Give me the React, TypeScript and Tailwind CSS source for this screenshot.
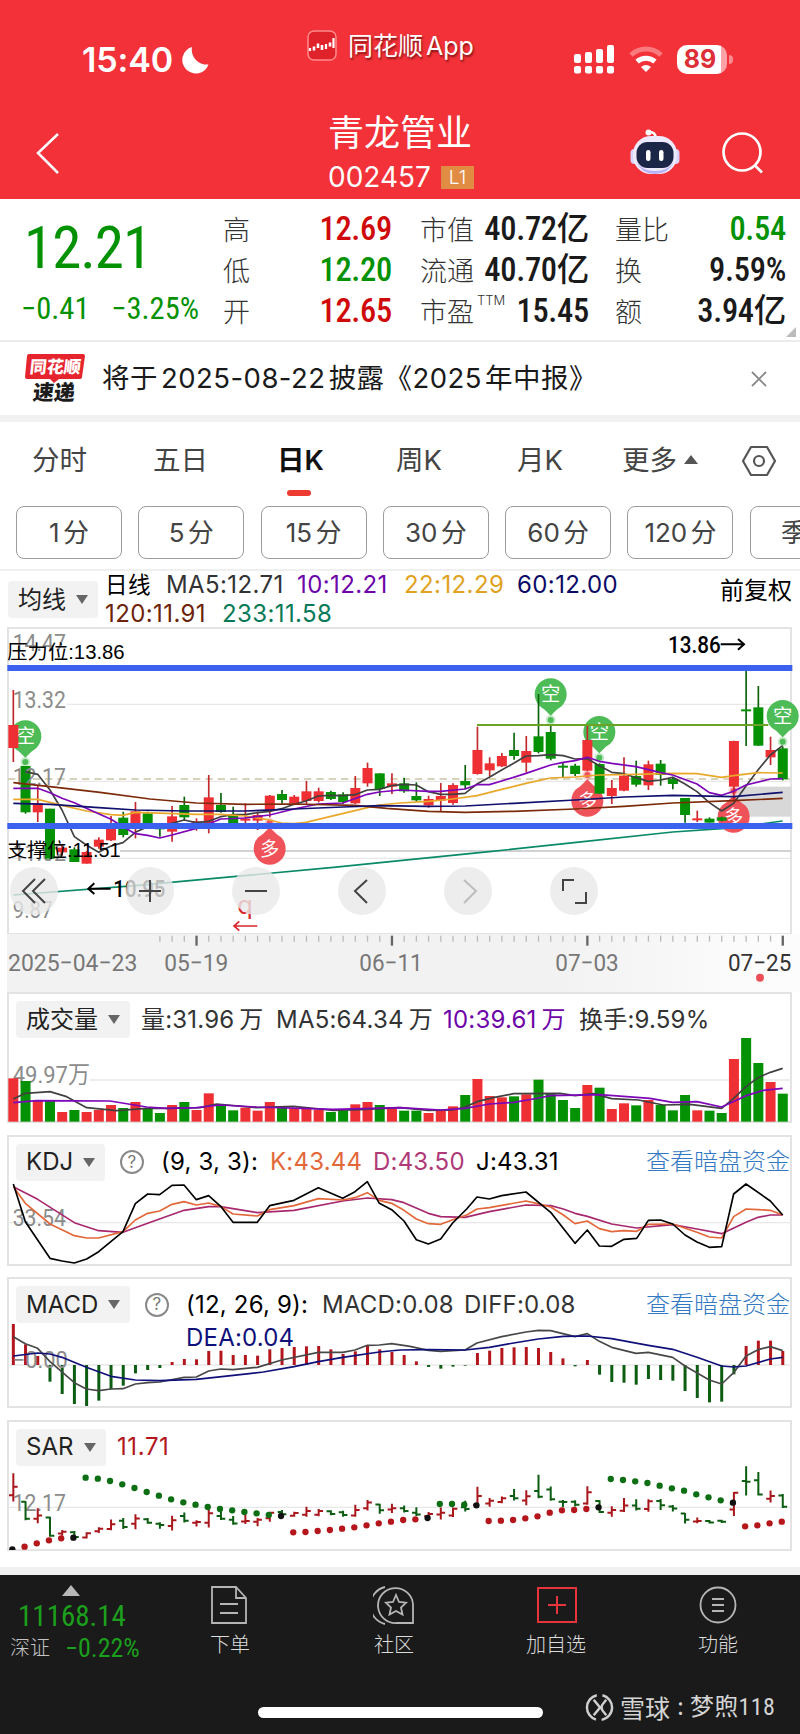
import type { ReactNode } from "react";

const SANS = "font-['Inter','Noto_Sans_CJK_SC',sans-serif]";
const DIN = "font-['Roboto','Noto_Sans_CJK_SC',sans-serif] [font-stretch:85%]";

const RED = "#ee2f33";
const GREEN = "#049204";

// All charts share one horizontal scale: three chart units per pixel, 64 trading days.
const dayX = (i: number) => 40 + i * 36.64;

type Side = "r" | "g";

// side, high, body top, body bottom, low
const candles: [Side, number, number, number, number][] = [
  ["r", 210, 315, 384, 426], ["g", 438, 438, 577, 581], ["r", 495, 550, 577, 606], ["g", 566, 566, 716, 716],
  ["r", 675, 683, 697, 707], ["g", 682, 688, 726, 726], ["r", 693, 696, 731, 731], ["r", 652, 659, 680, 686],
  ["r", 588, 622, 661, 663], ["g", 575, 593, 645, 652], ["r", 546, 574, 617, 655], ["g", 575, 580, 609, 609],
  ["g", 610, 618, 628, 650], ["r", 558, 589, 635, 665], ["g", 530, 555, 592, 600], ["r", 595, 604, 609, 632],
  ["r", 465, 532, 610, 640], ["g", 519, 555, 576, 578], ["g", 560, 584, 615, 618], ["r", 550, 596, 600, 612],
  ["r", 575, 585, 602, 630], ["r", 525, 527, 573, 592], ["g", 510, 522, 540, 551], ["r", 525, 530, 551, 553],
  ["r", 483, 514, 543, 552], ["r", 503, 514, 543, 547], ["g", 512, 516, 537, 540], ["g", 517, 523, 546, 551],
  ["r", 468, 504, 550, 552], ["r", 428, 444, 490, 500], ["g", 460, 460, 507, 528], ["r", 460, 490, 500, 522],
  ["g", 473, 490, 514, 518], ["g", 487, 528, 541, 545], ["r", 527, 537, 556, 563], ["r", 489, 528, 542, 574],
  ["r", 490, 495, 549, 554], ["g", 435, 483, 496, 508], ["r", 320, 390, 462, 464], ["r", 412, 430, 451, 470],
  ["r", 399, 408, 439, 441], ["g", 338, 390, 408, 419], ["r", 348, 393, 428, 457], ["g", 222, 349, 396, 400],
  ["g", 318, 336, 416, 421], ["g", 428, 437, 440, 474], ["g", 431, 437, 462, 468], ["r", 315, 360, 452, 454],
  ["g", 430, 432, 521, 521], ["r", 480, 504, 528, 552], ["r", 412, 467, 512, 514], ["g", 422, 468, 494, 500],
  ["r", 422, 433, 496, 510], ["g", 420, 431, 465, 497], ["g", 470, 477, 492, 508], ["g", 534, 534, 585, 608],
  ["r", 572, 595, 600, 606], ["g", 592, 596, 608, 608], ["g", 590, 592, 602, 604], ["r", 362, 363, 500, 545],
  ["g", 152, 268, 273, 378], ["g", 198, 262, 377, 378], ["r", 350, 390, 412, 435], ["g", 380, 385, 478, 481],
];

const averages = [
  { color: "#0a8a68", d: "40,825 406,797 700,770 1000,742 1200,722 1468,695 1750,665 2018,636 2165,626 2250,616 2348,603" },
  { color: "#404040", d: "76,455 113,463 150,510 186,570 223,650 259,675 296,697 333,678 369,668 406,637 443,620 479,622 516,610 552,600 589,608 626,604 662,590 699,584 736,584 772,578 809,574 845,566 882,553 918,543 955,528 992,526 1028,527 1065,524 1102,510 1138,508 1175,497 1212,493 1249,495 1285,515 1322,523 1358,523 1395,520 1431,492 1468,472 1505,450 1541,430 1578,408 1615,407 1652,404 1690,407 1725,417 1762,416 1798,437 1835,457 1872,461 1908,473 1945,484 1982,480 2018,472 2055,492 2091,515 2128,548 2165,573 2201,550 2238,498 2274,450 2311,405 2348,377" },
  { color: "#eaa82a", d: "40,538 113,538 186,556 259,573 333,584 369,586 406,577 589,583 662,583 736,588 809,600 845,609 882,611 918,607 955,598 1065,572 1102,563 1138,555 1200,549 1285,544 1358,537 1431,527 1505,508 1578,490 1652,474 1725,471 1798,465 1908,463 2018,460 2091,461 2165,472 2201,467 2274,458 2348,459" },
  { color: "#7d06b8", d: "40,505 113,505 150,518 186,535 223,548 259,565 333,598 369,620 406,641 443,646 479,654 516,645 589,625 626,612 662,597 736,594 809,585 882,567 955,552 1028,549 1102,523 1138,516 1200,510 1285,514 1322,514 1395,507 1431,494 1468,494 1505,483 1578,460 1652,435 1690,427 1725,422 1762,412 1798,424 1835,430 1908,440 1982,458 2018,465 2091,492 2128,518 2165,526 2201,514 2238,495 2311,477 2348,476" },
  { color: "#7c2b0a", d: "40,488 150,500 300,517 450,537 589,549 736,553 882,552 1065,556 1160,565 1285,574 1395,577 1541,574 1725,567 1872,559 2018,549 2200,542 2348,535" },
  { color: "#10106e", d: "40,550 150,553 296,563 406,570 552,573 736,573 882,567 1028,561 1138,557 1285,559 1395,558 1541,550 1725,540 1872,531 2018,526 2200,530 2348,517" },
];

const volumes = [
  280, 288, 345, 345, 381, 375, 381, 375, 360, 369, 351, 370, 384, 360, 351, 375, 325, 360, 376, 368, 377, 351,
  366, 370, 369, 375, 381, 377, 358, 351, 360, 369, 377, 377, 384, 377, 364, 330, 282, 333, 337, 334, 328, 284,
  326, 345, 369, 300, 308, 372, 355, 361, 345, 360, 376, 330, 376, 377, 384, 222, 159, 234, 291, 326,
];

// bar end of each MACD column, measured from the zero line at 284
const macd = [
  162, 223, 258, 335, 372, 402, 408, 392, 358, 347, 310, 300, 294, 276, 267, 268, 243, 242, 255, 255, 257, 238,
  234, 231, 229, 228, 238, 252, 244, 227, 238, 246, 255, 274, 291, 296, 290, 287, 249, 242, 234, 232, 231, 234,
  246, 265, 289, 270, 314, 336, 338, 344, 327, 330, 332, 363, 384, 397, 395, 313, 228, 212, 212, 243,
];

// runs of SAR dots: first day, colour, heights
const sarRuns: { from: number; color: string; ys: number[] }[] = [
  { from: 0, color: "#111", ys: [838] },
  { from: 1, color: "#b5161c", ys: [830, 820, 811, 805] },
  { from: 5, color: "#111", ys: [803] },
  { from: 6, color: "#0d6e14", ys: [623, 626, 633, 643, 654, 666, 677, 688, 697, 704, 711, 717, 721, 726, 730, 735] },
  { from: 22, color: "#111", ys: [738] },
  { from: 23, color: "#b5161c", ys: [787, 786, 783, 780, 776, 772, 766, 760, 755, 750, 748] },
  { from: 34, color: "#111", ys: [744] },
  { from: 35, color: "#0d6e14", ys: [702, 702, 704] },
  { from: 38, color: "#111", ys: [706] },
  { from: 39, color: "#b5161c", ys: [753, 752, 750, 745, 739, 728, 721, 720, 717] },
  { from: 48, color: "#111", ys: [712] },
  { from: 49, color: "#0d6e14", ys: [627, 630, 634, 639, 647, 655, 662, 673, 682, 691] },
  { from: 59, color: "#111", ys: [698] },
  { from: 60, color: "#b5161c", ys: [769, 766, 760, 755] },
];

function Line({ d, color, w = 5 }: { d: string; color: string; w?: number }) {
  return <polyline points={d} fill="none" stroke={color} strokeWidth={w} strokeLinejoin="round" />;
}

function Scale({ x = 38, y, w, children }: { x?: number; y: number; w: number; children: string }) {
  return (
    <text
      x={x}
      y={y}
      textLength={w}
      lengthAdjust="spacingAndGlyphs"
      className="fill-[#8c8c8c] font-['Roboto','Noto_Sans_CJK_SC',sans-serif] text-[70px]"
    >
      {children}
    </text>
  );
}

function Pin({ x, y, down }: { x: number; y: number; down?: boolean }) {
  const color = down ? "#4dbb56" : "#f0525a";
  const s = down ? 1 : -1;
  return (
    <g>
      <path d={`M${x - 24} ${y + 40 * s} L${x} ${y + 64 * s} L${x + 24} ${y + 40 * s}Z`} fill={color} />
      <circle cx={x} cy={y} r={48} fill={color} />
      <circle cx={x} cy={y + 77 * s} r={15} fill={color} opacity={0.3} />
      <circle cx={x} cy={y + 77 * s} r={9} fill={color} />
      <text x={x} y={y + 21} textAnchor="middle" className="fill-white font-['Noto_Sans_CJK_SC',sans-serif] text-[58px]">
        {down ? "空" : "多"}
      </text>
    </g>
  );
}

function CandleChart() {
  return (
    <svg viewBox="0 21 2400 921" className="absolute top-0 left-0 h-[307px] w-[800px] overflow-visible">
      <path d="M200 253H2370M200 484H2370M24 715H2370" stroke="#e8e8e8" strokeWidth={4} />
      <path d="M360 693H2375" stroke="#d2d2d2" strokeWidth={6} />
      <path d="M24 477H2370" stroke="#c9c5a4" strokeWidth={4} strokeDasharray="22 15" />
      <rect x={2215} y={500} width={160} height={90} fill="#d8d8d8" />
      <Scale y={92} w={160}>14.47</Scale>
      <Scale y={263} w={160}>13.32</Scale>
      <Scale y={724} w={160}>11.02</Scale>
      <Scale y={893} w={120}>9.87</Scale>
      <Pin x={76} y={349} down />
      <Pin x={1652} y={223} down />
      <Pin x={1798} y={336} down />
      <Pin x={2348} y={288} down />
      <Pin x={809} y={686} />
      <Pin x={1762} y={542} />
      <Pin x={2201} y={590} />
      {candles.map(([side, hi, top, bot, lo], i) => {
        const color = side === "r" ? RED : GREEN;
        const x = dayX(i);
        return (
          <g key={i}>
            <path d={`M${x} ${hi}V${lo}`} stroke={side === "r" ? "#c4272c" : "#0b640b"} strokeWidth={5} />
            <rect x={x - 15} y={top} width={30} height={Math.max(bot - top, 6)} fill={color} />
          </g>
        );
      })}
      <Scale y={495} w={160}>12.17</Scale>
      <path d="M1431 315H2305" stroke="#6ca326" strokeWidth={6} />
      {averages.map((a) => (
        <Line key={a.color} d={a.d} color={a.color} />
      ))}
      <path d="M22 144H2377M22 618H2377" stroke="#3b62ee" strokeWidth={18} />
      <g className="fill-black font-['Liberation_Sans','Noto_Sans_CJK_SC',sans-serif] text-[58px]">
        <text x={22} y={118} textLength={352} lengthAdjust="spacingAndGlyphs">压力位:13.86</text>
        <text x={22} y={712} textLength={340} lengthAdjust="spacingAndGlyphs">支撑位:11.51</text>
      </g>
      <g className="fill-black font-['Roboto',sans-serif] text-[70px] font-medium">
        <text x={2004} y={99} textLength={158} lengthAdjust="spacingAndGlyphs">13.86</text>
        <text x={340} y={832} textLength={156} lengthAdjust="spacingAndGlyphs">10.95</text>
      </g>
      <path d="M2162 73H2232M2214 57L2232 73L2214 89M332 806H265M283 790L265 806L283 822" fill="none" stroke="#000" strokeWidth={6} />
      <text x={712} y={882} className="fill-[#d8262c] font-['Inter',sans-serif] text-[76px]">q</text>
      <path d="M772 918H702M718 904L702 918L718 932" fill="none" stroke="#d8262c" strokeWidth={5} />
    </svg>
  );
}

const tools = [
  { icon: <path d="M25 12L13 24L25 36M35 12L23 24L35 36" />, gap: "mr-[68px]" },
  { icon: <path d="M13 24H35M24 13V35" />, gap: "mr-[58px]" },
  { icon: <path d="M13 24H35" />, gap: "mr-[58px]" },
  { icon: <path d="M29 13L17 24L29 36" />, gap: "mr-[58px]" },
  { icon: <path d="M20 13L32 24L20 36" stroke="#bdbdbd" />, gap: "mr-[58px]" },
  { icon: <path d="M24 13H13V24M36 25V36H25" />, gap: "" },
];

function Caret() {
  return <span className="h-0 w-0 border-x-[6px] border-t-[9px] border-x-transparent border-t-[#666]" />;
}

function Selector({ label, className }: { label: string; className: string }) {
  return (
    <div className={`flex h-[37px] shrink-0 items-center justify-between rounded bg-[#f2f2f2] pr-[10px] pl-[10px] text-[24px] tracking-normal text-[#222] ${className}`}>
      {label}
      <Caret />
    </div>
  );
}

function Help() {
  return (
    <span className="flex h-6 w-6 shrink-0 items-center justify-center rounded-full border-2 border-[#8a8a8a] text-[17px] leading-none text-[#777]">
      ?
    </span>
  );
}

function Panel({ head, view, children }: { head: ReactNode; view: string; children: ReactNode }) {
  return (
    <section className="relative h-[142.500px]">
      <div className="mx-[7px] h-[131px] w-[785px] border-2 border-[#e3e3e3]" />
      <svg viewBox={view} className="absolute top-0 left-0 h-[130px] w-[800px]">
        {children}
      </svg>
      <div className="absolute top-[9px] left-[16px] flex h-[37px] w-[784px] items-center text-[24px] font-[380] tracking-[0.2px] whitespace-nowrap [word-spacing:-2px]">
        {head}
      </div>
    </section>
  );
}

function Header() {
  return (
    <header className="h-[199px] bg-[#f23138] text-white">
      <div className="flex h-[98px] items-start">
        <div className="mt-[40px] ml-[82px] flex w-[225px] items-center">
          <span className="w-[99px] text-[34px] leading-[40px] font-semibold tracking-[-0.1px]">15:40</span>
          <svg viewBox="0 0 28 28" className="h-7 w-7 fill-white">
            <path d="M11 1A13.500 13.500 0 1 0 27.500 18.500A15 15 0 0 1 11 1Z" />
          </svg>
        </div>
        <svg viewBox="0 0 30 31" className="mt-[30px] h-[31px] w-[30px]" fill="none" stroke="#fff">
          <rect x="1" y="1" width="28" height="29" rx="6" fill="#e0222b" stroke="#ff8b8b" strokeWidth="1.500" />
          <path d="M3 21V18M19 19V14M26.500 18V8" strokeWidth="2.200" />
          <path d="M7 16.500V20.500M11 13.500V18M15 15V20M23 12.500V16.500" strokeWidth="2.600" />
        </svg>
        <span className="mt-[28px] ml-[11px] text-[25px] leading-[36px] [text-shadow:1px_2px_2px_rgba(60,0,0,0.6)] [word-spacing:-4px]">
          同花顺 App
        </span>
        <svg viewBox="0 0 42 30" className="mt-[44px] ml-auto h-[30px] w-[42px] fill-white">
          <rect x="1" y="10" width="7" height="9" rx="2" />
          <rect x="12" y="8" width="7" height="11" rx="2" />
          <rect x="23" y="5" width="7" height="14" rx="2" />
          <rect x="34" y="1" width="7" height="18" rx="2" />
          <rect x="1" y="22" width="7" height="7.500" rx="2" />
          <rect x="12" y="22" width="7" height="7.500" rx="2" />
          <rect x="23" y="22" width="7" height="7.500" rx="2" />
          <rect x="34" y="22" width="7" height="7.500" rx="2" />
        </svg>
        <svg viewBox="0 0 36 28" className="mt-[45px] ml-[13px] h-7 w-9" fill="none" strokeWidth="5">
          <path d="M3 10A22 22 0 0 1 33 10" stroke="#fb7a7e" />
          <path d="M9 16.500A14 14 0 0 1 27 16.500" stroke="#fff" />
          <path d="M13 22A8 8 0 0 1 23 22L18 27Z" fill="#fff" />
        </svg>
        <div className="mt-[45px] ml-[13px] flex h-[29px] w-[50px] items-center justify-center rounded-[10px] bg-[linear-gradient(90deg,#fff_88%,#fba3a6_88%)] pr-1 text-[25px] font-bold text-[#dd2f38]">
          89
        </div>
        <span className="mt-[55px] mr-[67px] ml-[2px] h-[9px] w-[4px] rounded-r-full bg-[#f98e92]" />
      </div>
      <div className="flex h-[101px] items-start">
        <svg viewBox="0 0 24 42" className="mt-[34px] ml-[36px] h-[42px] w-6" fill="none" stroke="#fff" strokeWidth="2.500">
          <path d="M22 2L2 21L22 41" />
        </svg>
        <div className="ml-[268px] w-[146px]">
          <div className="mt-[6px] font-['Noto_Sans_CJK_SC',sans-serif] text-[36px] leading-[52px] whitespace-nowrap">青龙管业</div>
          <div className="mt-[6px] flex items-center justify-between">
            <span className="text-[28px] leading-[30px]">002457</span>
            <span className="h-[23px] w-[33px] bg-[#e08c42] text-center text-[19px] leading-[23px] font-light">L1</span>
          </div>
        </div>
        <svg viewBox="0 0 50 46" className="mt-[31px] ml-[156px] h-[46px] w-[50px]">
          <path d="M26 9Q25 3 20 3" fill="none" stroke="#fff" strokeWidth="2.500" />
          <circle cx="18.500" cy="3.500" r="3" fill="#fff" />
          <rect x="0.500" y="20" width="9" height="15" rx="4" fill="#d9d4ff" />
          <rect x="40.500" y="20" width="9" height="15" rx="4" fill="#d9d4ff" />
          <rect x="3" y="7" width="44" height="38" rx="18" fill="#edeaff" />
          <path d="M6 33Q12 45 25 45T44 33Q38 42 25 42T6 33Z" fill="#b9b2f7" />
          <rect x="6.500" y="13" width="37" height="26" rx="11" fill="#1c2748" />
          <rect x="16" y="21" width="4.500" height="11" rx="2.200" fill="#fff" />
          <rect x="29" y="21" width="4.500" height="11" rx="2.200" fill="#fff" />
        </svg>
        <svg viewBox="0 0 42 42" className="mt-[34px] ml-[42px] h-[42px] w-[42px]" fill="none" stroke="#fff" strokeWidth="2.700">
          <circle cx="20" cy="20" r="18.500" />
          <path d="M32.500 33L40 40.500" />
        </svg>
      </div>
    </header>
  );
}

function QuoteRow({ label, value, tone, sup }: { label: string; value: string; tone: string; sup?: string }) {
  return (
    <div className="flex h-[41px] items-center justify-between whitespace-nowrap">
      <span className="relative font-['Noto_Sans_CJK_SC',sans-serif] text-[27px] font-light text-[#333]">
        {label}
        {sup && <sup className="absolute top-[3px] left-[57px] font-['Inter',sans-serif] text-[13px] leading-none">{sup}</sup>}
      </span>
      <span className={`text-[32.500px] font-medium tracking-[-0.3px] ${DIN} ${tone}`}>{value}</span>
    </div>
  );
}

function Quote() {
  return (
    <section className="relative flex h-[143px] border-b-2 border-[#ececec] pt-[9.500px]">
      <div className="w-[223px] text-[#049204]">
        <div className={`mt-[5px] ml-[24px] text-[59px] leading-[68px] tracking-[-1px] ${DIN} font-[450]`}>12.21</div>
        <div className={`mt-[6px] ml-[21px] flex w-[178px] justify-between text-[30.500px] leading-[42px] ${DIN}`}>
          <span>−0.41</span>
          <span>−3.25%</span>
        </div>
      </div>
      <div className="w-[169px]">
        <QuoteRow label="高" value="12.69" tone="text-[#d00a0a]" />
        <QuoteRow label="低" value="12.20" tone="text-[#049204]" />
        <QuoteRow label="开" value="12.65" tone="text-[#d00a0a]" />
      </div>
      <div className="ml-[28px] w-[169px]">
        <QuoteRow label="市值" value="40.72亿" tone="text-[#1a1a1a]" />
        <QuoteRow label="流通" value="40.70亿" tone="text-[#1a1a1a]" />
        <QuoteRow label="市盈" value="15.45" tone="text-[#1a1a1a]" sup="TTM" />
      </div>
      <div className="ml-[26px] w-[171px]">
        <QuoteRow label="量比" value="0.54" tone="text-[#049204]" />
        <QuoteRow label="换" value="9.59%" tone="text-[#1a1a1a]" />
        <QuoteRow label="额" value="3.94亿" tone="text-[#1a1a1a]" />
      </div>
      <span className="absolute right-[4px] bottom-[3px] h-0 w-0 border-b-[10px] border-l-[10px] border-b-[#bbb] border-l-transparent" />
    </section>
  );
}

function Notice() {
  return (
    <section className="flex h-[73px] items-center">
      <div className="relative ml-[25px] h-[52px] w-[60px]">
        <svg viewBox="0 0 60 52" className="absolute inset-0 h-[52px] w-[60px]">
          <path d="M4 1H58Q60 1 60 3L57 24Q57 26 55 26H34L29 30L25 26H2Q0 26 0 24L2 3Q2 1 4 1Z" fill="#e5242d" />
        </svg>
        <div className="absolute top-[3px] left-[5px] -skew-x-6 text-[17px] leading-[22px] font-black whitespace-nowrap text-white">同花顺</div>
        <div className="absolute top-[28px] left-[8px] w-[46px] -skew-x-6 text-[21px] leading-[23px] font-black whitespace-nowrap text-[#1c1c1c]">
          速递
        </div>
      </div>
      <span className="ml-[17px] text-[27.500px] font-[380] tracking-[0.45px] whitespace-nowrap text-[#1a1a1a] [word-spacing:-5px]">
        将于 2025-08-22 披露《2025 年中报》
      </span>
      <svg viewBox="0 0 16 16" className="mr-[33px] ml-auto h-4 w-4" stroke="#8a8a8a" strokeWidth="1.800">
        <path d="M1 1L15 15M15 1L1 15" />
      </svg>
    </section>
  );
}

const periods = ["1 分", "5 分", "15 分", "30 分", "60 分", "120 分", "季K"];

function Tabs() {
  return (
    <section className="h-[145px] border-t-[7px] border-[#f1f1f1] font-[380]">
      <div className="flex h-[78px] items-center pl-[32px] text-[27.500px] whitespace-nowrap text-[#444]">
        <span className="w-[121px]">分时</span>
        <span className="w-[124px]">五日</span>
        <span className="relative w-[119px] font-semibold text-[#111]">
          日K
          <span className="absolute top-[50px] left-[10px] h-[6px] w-[24px] rounded-full bg-[#ee3b31]" />
        </span>
        <span className="w-[121px]">周K</span>
        <span className="w-[105px]">月K</span>
        <span className="w-[62px]">更多</span>
        <span className="w-[57px]">
          <span className="mb-[4px] block h-0 w-0 border-x-[7px] border-b-[9px] border-x-transparent border-b-[#555]" />
        </span>
        <svg viewBox="0 0 36 32" className="h-8 w-9" fill="none" stroke="#555" strokeWidth="2.200">
          <path d="M10 2H26L34 16L26 30H10L2 16Z" strokeLinejoin="round" />
          <circle cx="18" cy="16" r="5" />
        </svg>
      </div>
      <div className="mt-[6px] flex h-[53px] gap-[16.300px] overflow-hidden pl-[16px]">
        {periods.map((p) => (
          <div key={p} className="flex w-[106px] shrink-0 items-center justify-center rounded-[8px] border border-[#9c9c9c] text-[26px] whitespace-nowrap text-[#444] [word-spacing:-4px]">
            {p}
          </div>
        ))}
      </div>
    </section>
  );
}

function Averages() {
  return (
    <div className="flex h-[58px] border-t-2 border-[#efefef]">
      <Selector label="均线" className="mt-[10px] ml-[8px] w-[90px] pl-[8px]" />
      <div className="mt-[-1px] ml-[7px] text-[24px] leading-[29px] font-[380] tracking-[0.4px] whitespace-nowrap">
        <div className="flex">
          <span className="w-[61px] text-[22.500px] font-normal text-black">日线</span>
          <span className="w-[131px] text-[#333]">MA5:12.71</span>
          <span className="w-[107px] text-[#6d05a8]">10:12.21</span>
          <span className="w-[113px] text-[#e0a21f]">22:12.29</span>
          <span className="text-[#0b0b66]">60:12.00</span>
        </div>
        <div className="flex">
          <span className="w-[117px] text-[#6d2408]">120:11.91</span>
          <span className="text-[#067a58]">233:11.58</span>
        </div>
      </div>
      <span className="mt-[4px] mr-[8px] ml-auto text-[24px] leading-[32px]">前复权</span>
    </div>
  );
}

const dates = [
  { x: 24, w: 388, label: "2025−04−23" },
  { x: 493, w: 192, label: "05−19" },
  { x: 1078, w: 190, label: "06−11" },
  { x: 1666, w: 190, label: "07−03" },
  { x: 2184, w: 190, label: "07−25" },
];

function DateAxis() {
  return (
    <div className="relative ml-[7px] h-[58px] bg-[linear-gradient(90deg,#f2f2f2_70%,#fcfcfc_95%)]">
      <svg viewBox="21 941 2379 171" className="h-[57px] w-[793px]">
        {candles.map((_, i) =>
          i < 12 ? null : (
            <path
              key={i}
              d={`M${dayX(i)} 946V${i % 16 === 15 ? 976 : 964}`}
              stroke={i % 16 === 15 ? "#666" : "#bbb"}
              strokeWidth={i % 16 === 15 ? 7 : 4}
            />
          ),
        )}
        {dates.map((d, i) => (
          <text
            key={d.label}
            x={d.x}
            y={1053}
            textLength={d.w}
            lengthAdjust="spacingAndGlyphs"
            className={i === 4 ? "fill-[#333] font-['Roboto'] text-[72px]" : "fill-[#777] font-['Roboto'] text-[72px]"}
          >
            {d.label}
          </text>
        ))}
        <circle cx={2280} cy={1072} r={12} fill="#ee4e58" />
      </svg>
    </div>
  );
}

function Link() {
  return <span className="mr-[10px] ml-auto text-[24px] font-light tracking-normal text-[#3278c2]">查看暗盘资金</span>;
}

function VolumePanel() {
  return (
    <Panel
      view="0 21 2400 390"
      head={
        <>
          <Selector label="成交量" className="w-[114px]" />
          <span className="ml-[11px] w-[135px] text-[#333]">量:31.96 万</span>
          <span className="w-[167px] text-[#333]">MA5:64.34 万</span>
          <span className="w-[136px] text-[#6d05a8]">10:39.61 万</span>
          <span className="text-[#333]">换手:9.59%</span>
        </>
      }
    >
      <path d="M270 285H2375" stroke="#e8e8e8" strokeWidth={4} />
      <Scale y={295} w={232}>49.97万</Scale>
      {volumes.map((y, i) => (
        <rect key={i} x={dayX(i) - 15} y={y} width={30} height={410 - y} fill={candles[i][0] === "r" ? RED : GREEN} />
      ))}
      <Line color="#404040" d="40,342 76,325 150,320 200,335 260,368 350,377 440,370 500,370 600,368 650,357 770,368 880,364 1000,376 1080,374 1200,368 1285,376 1358,375 1395,366 1431,350 1480,338 1541,326 1680,325 1725,332 1780,326 1835,341 1915,345 1990,360 2070,358 2165,370 2201,340 2238,305 2274,278 2311,262 2348,250" />
      <Line color="#7d06b8" d="40,353 110,347 330,348 440,366 500,370 590,368 660,360 770,366 1000,373 1200,368 1322,375 1395,370 1468,357 1541,352 1600,342 1652,332 1800,329 1950,340 2018,352 2091,350 2165,366 2238,332 2290,316 2348,310" />
    </Panel>
  );
}

function KdjPanel() {
  return (
    <Panel
      view="0 450 2400 390"
      head={
        <>
          <Selector label="KDJ" className="w-[89px]" />
          <span className="ml-[15px] w-[41px]"><Help /></span>
          <span className="w-[109px] text-black [word-spacing:0px]">(9, 3, 3):</span>
          <span className="w-[103px] text-[#e2683a]">K:43.44</span>
          <span className="w-[103px] text-[#b03a78]">D:43.50</span>
          <span className="text-black">J:43.31</span>
          <Link />
        </>
      }
    >
      <path d="M24 713H2375" stroke="#e8e8e8" strokeWidth={4} />
      <Scale y={722} w={160}>33.54</Scale>
      <Line color="#a8286e" d="40,605 113,643 223,713 296,737 369,742 443,715 552,676 626,665 662,665 772,683 882,676 1028,648 1102,639 1175,644 1212,653 1285,685 1322,695 1395,697 1468,680 1578,660 1652,662 1690,672 1725,685 1762,694 1835,717 1910,729 2018,719 2091,732 2165,746 2238,712 2274,697 2311,690 2348,690" />
      <Line color="#e2683a" d="40,605 76,655 150,717 223,752 260,759 296,759 369,740 406,705 443,685 479,678 516,658 552,650 589,660 626,654 662,664 699,687 772,693 809,674 882,662 955,641 1028,645 1065,638 1102,623 1138,646 1175,655 1212,676 1249,702 1285,716 1322,718 1358,704 1400,690 1431,672 1468,668 1578,648 1610,655 1652,666 1690,690 1725,716 1762,708 1798,731 1835,740 1872,737 1910,739 1945,718 2018,717 2091,742 2128,756 2165,759 2201,695 2238,672 2274,674 2311,676 2348,690" />
      <Line color="#000" d="40,597 76,710 150,820 186,828 223,834 260,822 296,800 369,740 406,656 443,627 479,629 516,601 552,600 589,644 626,632 662,664 699,712 772,712 809,662 882,646 955,608 1028,640 1065,620 1102,590 1138,655 1175,674 1212,708 1249,764 1285,777 1322,762 1358,714 1400,672 1431,636 1468,642 1505,632 1578,621 1652,682 1725,775 1762,735 1798,783 1835,784 1872,763 1910,760 1945,706 1982,705 2018,717 2055,750 2091,771 2128,787 2165,785 2201,627 2238,597 2311,648 2348,690" />
    </Panel>
  );
}

function MacdPanel() {
  return (
    <Panel
      view="0 21 2400 390"
      head={
        <>
          <Selector label="MACD" className="w-[114px]" />
          <span className="ml-[15px] w-[41px]"><Help /></span>
          <span className="relative w-[136px] text-black [word-spacing:0px]">
            (12, 26, 9):
            <span className="absolute top-[33px] left-0 text-[#10107a]">DEA:0.04</span>
          </span>
          <span className="w-[142px] text-[#333]">MACD:0.08</span>
          <span className="text-[#333]">DIFF:0.08</span>
          <Link />
        </>
      }
    >
      <path d="M24 285H2375" stroke="#e8e8e8" strokeWidth={4} />
      {macd.map((y, i) => (
        <path key={i} d={`M${dayX(i)} 285V${y}`} stroke={y < 285 ? "#b3161c" : "#0c5c12"} strokeWidth={9} />
      ))}
      <Scale y={294} w={165}>−0.00</Scale>
      <Line color="#484848" d="40,200 76,221 113,235 150,275 223,338 259,357 296,362 333,357 369,356 406,342 443,338 479,336 552,322 589,321 626,303 662,297 699,299 772,292 845,270 955,247 1028,247 1065,240 1102,226 1138,225 1175,221 1230,229 1285,241 1322,244 1395,240 1431,219 1505,200 1578,186 1615,181 1652,182 1725,200 1762,191 1798,214 1835,232 1908,250 1945,247 2018,262 2055,288 2128,330 2165,342 2201,308 2238,258 2274,239 2311,230 2348,242" />
      <Line color="#10107a" d="40,258 113,249 150,252 186,262 259,292 333,319 406,330 479,332 589,328 700,316 790,306 882,290 955,275 1028,262 1138,246 1200,240 1285,239 1395,240 1468,232 1541,219 1615,207 1690,199 1762,198 1835,206 1945,226 2018,238 2091,262 2165,288 2201,291 2238,288 2311,267 2348,262" />
    </Panel>
  );
}

function SarPanel() {
  // price bars reuse the candle data, compressed to this panel's range
  const py = (v: number) => 712 + (v - 483) * 0.366;
  return (
    <Panel
      view="0 450 2400 390"
      head={
        <>
          <Selector label="SAR" className="w-[90px]" />
          <span className="ml-[11px] tracking-[0.6px] text-[#b3161c]">11.71</span>
        </>
      }
    >
      <path d="M24 712H2375" stroke="#e8e8e8" strokeWidth={4} />
      <Scale y={722} w={160}>12.17</Scale>
      {candles.map(([side, hi, top, bot, lo], i) => {
        const x = dayX(i);
        const [open, close] = side === "r" ? [bot, top] : [top, bot];
        return (
          <path
            key={i}
            d={`M${x} ${py(hi) - 2}V${py(lo) + 3}M${x - 13} ${py(open)}H${x}M${x} ${py(close)}H${x + 13}`}
            stroke={side === "r" ? "#a9171c" : "#0c5c12"}
            strokeWidth={6}
          />
        );
      })}
      {sarRuns.map((run) =>
        run.ys.map((y, k) => <circle key={`${run.from}-${k}`} cx={dayX(run.from + k) - 3} cy={y} r={9.5} fill={run.color} />),
      )}
    </Panel>
  );
}

function NavItem({ label, className, children }: { label: string; className: string; children: ReactNode }) {
  return (
    <div className={`flex flex-col items-center ${className}`}>
      <svg viewBox="0 0 42 40" className="h-10 w-[42px]" fill="none" stroke="#b5b5b5" strokeWidth="1.800">
        {children}
      </svg>
      <span className="mt-[6px] text-[20px] leading-[28px] font-light whitespace-nowrap text-[#dcdcdc]">{label}</span>
    </div>
  );
}

function BottomBar() {
  return (
    <footer className="h-[159px] bg-[#1a1a1a]">
      <div className="flex h-[110px] pt-[10px]">
        <div className="w-[150px]">
          <span className="ml-[62px] block h-0 w-0 border-x-[9px] border-b-[11px] border-x-transparent border-b-[#b8b8b8]" />
          <div className={`ml-[18px] text-[29px] leading-[40px] text-[#1c9f1c] ${DIN}`}>11168.14</div>
          <div className="ml-[10px] flex items-center leading-[24px] whitespace-nowrap">
            <span className="w-[55px] text-[20px] font-light text-[#c4c4c4]">深证</span>
            <span className={`text-[26px] text-[#1c9f1c] ${DIN}`}>−0.22%</span>
          </div>
        </div>
        <NavItem label="下单" className="w-[160px]">
          <path d="M3 2H27L37 13V38H3ZM27 2V13H37M11 19H29M11 28H29" />
        </NavItem>
        <NavItem label="社区" className="ml-[4px] w-[160px]">
          <path d="M40 38H24A17.500 17.500 0 1 1 40 20ZM12 2A19 19 0 0 0 12 39" />
          <path d="M23 10L26 17L33 17.700L28 22.500L29.500 29.500L23 26L16.500 29.500L18 22.500L13 17.700L20 17Z" />
        </NavItem>
        <NavItem label="加自选" className="ml-[2px] w-[160px]">
          <path d="M3 3H41V37H3ZM22 11V29M13 20H31" stroke="#e8343b" strokeWidth="2" />
        </NavItem>
        <NavItem label="功能" className="ml-[4px] w-[156px]">
          <circle cx="21" cy="20" r="17.500" />
          <path d="M15 14H27M15 20H27M15 26H27" strokeWidth="2.200" />
        </NavItem>
      </div>
      <div className="relative flex h-[49px]">
        <div className="mt-[22px] ml-[258px] h-[11px] w-[285px] rounded-full bg-white" />
        <div className="mt-[4px] ml-[42px] flex h-[36px] items-center text-[#d4d4d4]">
          <svg viewBox="0 0 30 30" className="mr-[6px] h-[29px] w-[29px]" fill="none" stroke="#cfcfcf" strokeWidth="2.500">
            <circle cx="15" cy="15" r="13" strokeDasharray="34 6" strokeDashoffset="16" />
            <path d="M9 7L14 13Q16 15 14 17L9 23M22 7L18 12Q16 15 18 18L22 23" />
          </svg>
          <span className="font-['Noto_Sans_CJK_SC',sans-serif] text-[25px] leading-[36px] whitespace-nowrap">雪球</span>
          <span className="ml-[7px] w-[13px] text-[24px]">:</span>
          <span className={`text-[24px] leading-[36px] tracking-[0.3px] whitespace-nowrap ${DIN}`}>梦煦118</span>
        </div>
      </div>
    </footer>
  );
}

export default function App() {
  return (
    <main className={`flex h-[1734px] w-[800px] flex-col overflow-hidden bg-white ${SANS}`}>
      <Header />
      <Quote />
      <Notice />
      <Tabs />
      <div className="h-[9px]" />
      <Averages />
      <section className="relative h-[307px]">
        <div className="mx-[7px] h-[308px] w-[785px] border-2 border-[#e3e3e3]" />
        <CandleChart />
        <div className="absolute top-[240px] left-[10px] flex">
          {tools.map((t, i) => (
            <button key={i} className={`h-12 w-12 rounded-full bg-[#e8e8e8]/80 ${t.gap}`}>
              <svg viewBox="0 0 48 48" className="h-12 w-12" fill="none" stroke="#444" strokeWidth="2">
                {t.icon}
              </svg>
            </button>
          ))}
        </div>
      </section>
      <DateAxis />
      <VolumePanel />
      <KdjPanel />
      <MacdPanel />
      <SarPanel />
      <div className="mt-auto h-[8px] bg-[#f1f1f1]" />
      <BottomBar />
    </main>
  );
}
